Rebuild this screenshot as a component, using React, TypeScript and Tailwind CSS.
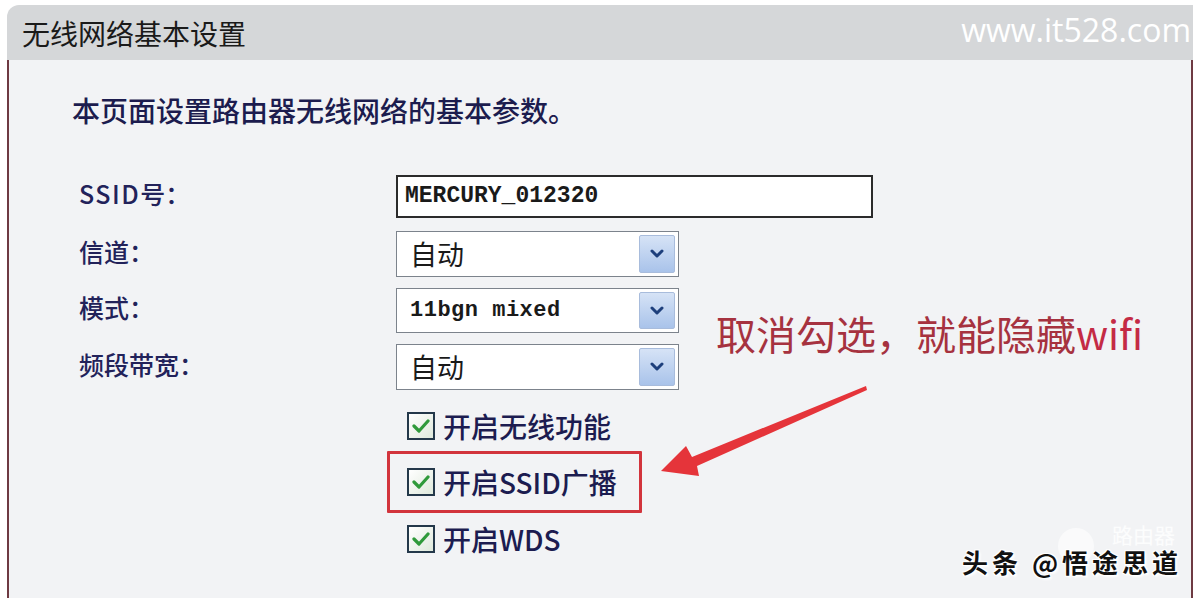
import React from "react";

const CJK = { fontFamily: '"Noto Sans CJK SC", "Noto Sans", sans-serif' };
const MONO = { fontFamily: '"Liberation Mono", "DejaVu Sans Mono", monospace' };

function Chevron() {
  return (
    <svg width="14" height="10" viewBox="0 0 14 10">
      <path d="M2 2 L7 7 L12 2" fill="none" stroke="#1d3f7c" strokeWidth="3" strokeLinecap="round" strokeLinejoin="round" />
    </svg>
  );
}

function Select({ children, mono }: { children: React.ReactNode; mono?: boolean }) {
  return (
    <div className="w-[283px] h-full border border-[#7c838c] bg-white flex items-center justify-between pl-[13px] pr-[3px] py-[3px]">
      {mono ? (
        <span className="text-[22px] font-bold text-[#1a1a1a] tracking-[0.5px]" style={MONO}>{children}</span>
      ) : (
        <span className="text-[27px] text-[#1a1a1a] leading-none -mt-[2px]" style={CJK}>{children}</span>
      )}
      <div className="w-[36px] h-full bg-gradient-to-b from-[#d6e3f6] to-[#a9c3ea] border border-[#a8bcdc] rounded-[2px] flex items-center justify-center">
        <Chevron />
      </div>
    </div>
  );
}

function Check({ label }: { label: string }) {
  return (
    <div className="flex items-center h-[28px] gap-[8px]">
      <div className="w-[28px] h-[28px] border-2 border-[#24384a] bg-gradient-to-br from-[#ffffff] to-[#dfe9dc] flex items-center justify-center">
        <svg width="18" height="14" viewBox="0 0 18 14">
          <path d="M2 7 L7 12 L16 2" fill="none" stroke="#2f9a3a" strokeWidth="3.2" strokeLinecap="round" strokeLinejoin="round" />
        </svg>
      </div>
      <span className="text-[28px] leading-none text-[#1c1c50] font-medium" style={CJK}>{label}</span>
    </div>
  );
}

const labelCls = "w-[317px] text-[25px] leading-none text-[#22225a] font-medium -mt-[6px]";

export default function App() {
  return (
    <div className="w-[1200px] h-[598px] bg-white pt-[5px] pl-[7px] pr-[7px] overflow-hidden relative">
      <div className="flex flex-col h-full">
        <div className="h-[55px] bg-[#d5d7d9] rounded-tl-[12px] flex items-center justify-between pl-[15px] pr-[2px]">
          <span className="text-[28px] leading-none text-[#1a1a1a]" style={CJK}>无线网络基本设置</span>
          <span className="text-[32px] leading-none text-white -mt-[6px]" style={{ fontFamily: '"Open Sans", "DejaVu Sans", sans-serif' }}>www.it528.com</span>
        </div>
        <div className="flex-1 bg-[#f2f3f5] border-l-2 border-r-2 border-[#6e3a42] pl-[63px] pt-[35px]">
          <div className="text-[28px] leading-[30px] text-[#1c1c4e] font-medium" style={CJK}>本页面设置路由器无线网络的基本参数。</div>
          <div className="flex flex-col mt-[50px] ml-[7px]">
            <div className="flex items-center h-[43px]">
              <div className={labelCls} style={CJK}><span className="tracking-[1.5px]">SSID</span>号：</div>
              <div className="w-[477px] h-full border-2 border-[#2b2b2b] bg-white flex items-center pl-[7px]">
                <span className="text-[23px] font-bold text-[#1a1a1a]" style={MONO}>MERCURY_012320</span>
              </div>
            </div>
            <div className="flex items-center h-[46px] mt-[13px]">
              <div className={labelCls} style={CJK}>信道：</div>
              <Select>自动</Select>
            </div>
            <div className="flex items-center h-[45px] mt-[11px]">
              <div className={labelCls} style={CJK}>模式：</div>
              <Select mono>11bgn mixed</Select>
            </div>
            <div className="flex items-center h-[46px] mt-[11px]">
              <div className={labelCls} style={CJK}>频段带宽：</div>
              <Select>自动</Select>
            </div>
            <div className="flex flex-col ml-[328px] mt-[22px]">
              <Check label="开启无线功能" />
              <div className="mt-[28px]"><Check label="开启SSID广播" /></div>
              <div className="mt-[29px]"><Check label="开启WDS" /></div>
            </div>
          </div>
        </div>
      </div>

      {/* annotation: red highlight box */}
      <div className="absolute left-[387px] top-[451px] w-[255px] h-[62px] border-[3px] border-[#d2343c] rounded-[1px]" />

      {/* annotation text */}
      <div className="absolute left-[716px] top-[313px] text-[40px] leading-none text-[#a6323f] whitespace-nowrap" style={CJK}>
        取消勾选，就能隐藏<span className="text-[#c42a45]">wifi</span>
      </div>

      {/* arrow */}
      <svg className="absolute left-0 top-0" width="1200" height="598" viewBox="0 0 1200 598">
        <polygon
          points="661,471 686,446 692,457 866,386 867,390 697,466 699,476"
          fill="#e5343a"
        />
      </svg>

      {/* footer watermark */}
      <div className="absolute left-[1058px] top-[528px] w-[36px] h-[36px] rounded-full bg-white/60" />
      <div className="absolute left-[1112px] top-[524px] text-[21px] leading-none text-white/80" style={CJK}>路由器</div>
      <div
        className="absolute left-[962px] top-[549px] text-[26px] leading-none font-bold text-[#111] whitespace-nowrap tracking-[4px]"
        style={{ ...CJK, textShadow: "1px 1px 0 #fff, -1px -1px 0 #fff, 1px -1px 0 #fff, -1px 1px 0 #fff, 2px 2px 2px rgba(255,255,255,0.9)" }}
      >
        头条 @悟途思道
      </div>
    </div>
  );
}
